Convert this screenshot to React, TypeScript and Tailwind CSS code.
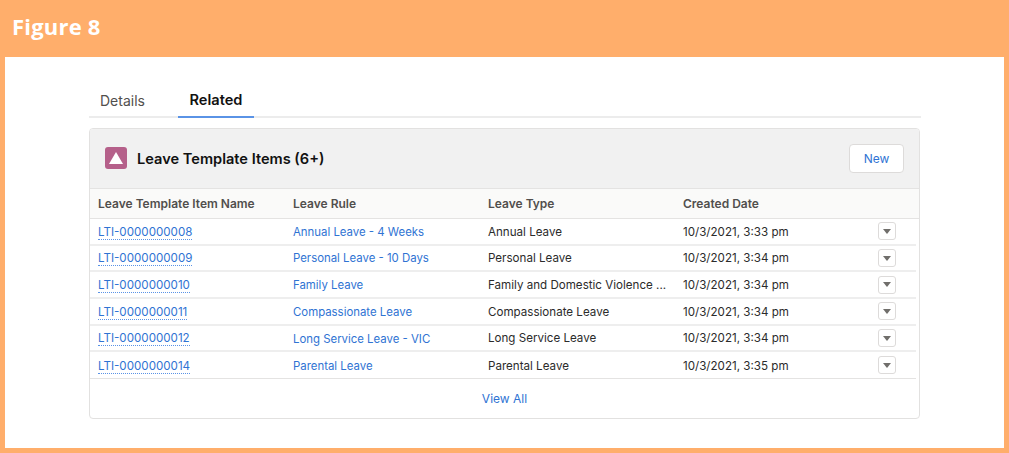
const rows = [
  ["LTI-0000000008", "Annual Leave - 4 Weeks", "Annual Leave", "10/3/2021, 3:33 pm"],
  ["LTI-0000000009", "Personal Leave - 10 Days", "Personal Leave", "10/3/2021, 3:34 pm"],
  ["LTI-0000000010", "Family Leave", "Family and Domestic Violence ...", "10/3/2021, 3:34 pm"],
  ["LTI-0000000011", "Compassionate Leave", "Compassionate Leave", "10/3/2021, 3:34 pm"],
  ["LTI-0000000012", "Long Service Leave - VIC", "Long Service Leave", "10/3/2021, 3:34 pm"],
  ["LTI-0000000014", "Parental Leave", "Parental Leave", "10/3/2021, 3:35 pm"],
];

const columns = ["Leave Template Item Name", "Leave Rule", "Leave Type", "Created Date"];

function RowMenu() {
  return (
    <div className="flex h-[18px] w-[18px] items-center justify-center rounded-[3px] border border-[#dddbda] bg-white">
      <svg width="8" height="5" viewBox="0 0 8 5">
        <path d="M0 0h8L4 5z" fill="#706e6b" />
      </svg>
    </div>
  );
}

export default function App() {
  return (
    <div className="flex h-[453px] w-[1009px] flex-col bg-[#ffae6b] font-['Inter',sans-serif]">
      <div className="flex h-[57px] items-center pb-[5px] pl-[12px]">
        <h1 className="font-['Open_Sans',sans-serif] text-[22px] font-bold tracking-[0.2px] text-white">Figure 8</h1>
      </div>

      <div className="mx-[5px] mb-[5px] flex-1 bg-white px-[84px] pt-[28px]">
        <div className="mr-[-1px] flex h-[33px] border-b-2 border-[#ececec] text-[14px]">
          <div className="flex w-[89px] pt-[5px] pl-[11px] text-[#514f4d]">Details</div>
          <div className="flex h-[33px] w-[76px] justify-center border-b-2 border-[#5a93e6] pt-[5px] text-[14.6px] font-semibold text-[#111]">
            Related
          </div>
        </div>

        <div className="mt-[10px] h-[291px] w-[831px] overflow-hidden rounded-[4px] border border-[#e2e1e0]">
          <div className="flex h-[59px] items-center justify-between bg-[#f1f1f1] pr-[15px] pl-[15px]">
            <div className="flex items-center gap-[10px]">
              <div className="flex h-[22px] w-[22px] items-center justify-center rounded-[3px] bg-[#b5608a]">
                <svg width="14" height="12" viewBox="0 0 14 12">
                  <path d="M7 0l7 12H0z" fill="#fff" />
                </svg>
              </div>
              <h2 className="pt-[2px] text-[14.6px] font-semibold text-[#111]">Leave Template Items (6+)</h2>
            </div>
            <div className="flex h-[29px] w-[55px] items-center justify-center rounded-[4px] border border-[#dddbda] bg-white text-[12px] text-[#2f73d3]">
              New
            </div>
          </div>

          <div className="grid h-[31px] grid-cols-[195px_195px_195px_1fr] items-center border-y border-[#e4e3e2] bg-[#fafaf9] pl-[8px] text-[12px] font-semibold text-[#514f4d]">
            {columns.map((c) => (
              <div key={c}>{c}</div>
            ))}
          </div>

          <div className="mr-[3px]">
            {rows.map((r) => (
              <div
                key={r[0]}
                className="grid h-[26.7px] grid-cols-[195px_195px_195px_1fr_auto] items-center border-b-2 border-[#eeeeee] pr-[20px] pl-[8px] text-[11.6px] text-[#2b2b2b] last:border-b last:border-[#e4e3e2]"
              >
                <div className="pt-[2px]">
                  <span className="border-b border-dotted border-[#5a93e6] text-[#2f73d3]">{r[0]}</span>
                </div>
                <div className="pt-[2px] text-[11.4px] text-[#2f73d3]">{r[1]}</div>
                <div className="pt-[2px]">{r[2]}</div>
                <div className="pt-[2px]">{r[3]}</div>
                <RowMenu />
              </div>
            ))}
          </div>

          <div className="flex h-[39px] items-center justify-center pt-[1px] text-[12px] text-[#2f73d3]">View All</div>
        </div>
      </div>
    </div>
  );
}
